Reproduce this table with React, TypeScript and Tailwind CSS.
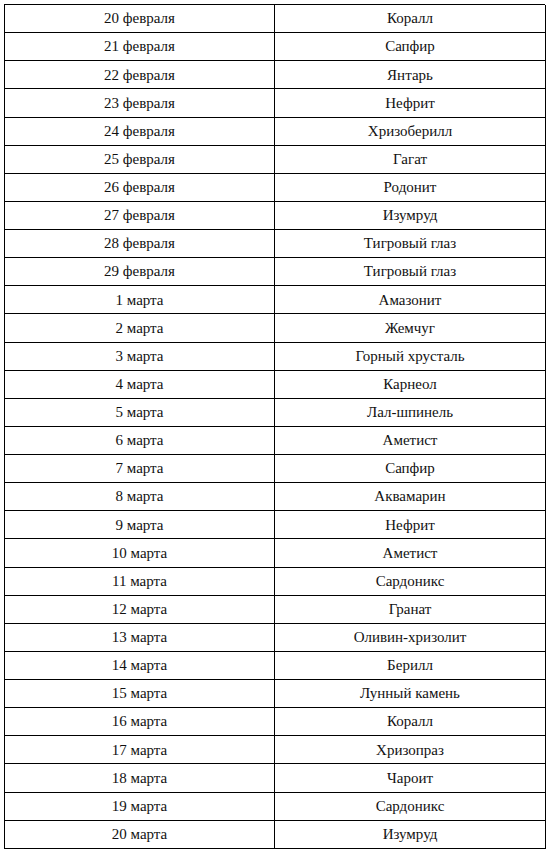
const rows: [string, string][] = [
  ['20 февраля', 'Коралл'],
  ['21 февраля', 'Сапфир'],
  ['22 февраля', 'Янтарь'],
  ['23 февраля', 'Нефрит'],
  ['24 февраля', 'Хризоберилл'],
  ['25 февраля', 'Гагат'],
  ['26 февраля', 'Родонит'],
  ['27 февраля', 'Изумруд'],
  ['28 февраля', 'Тигровый глаз'],
  ['29 февраля', 'Тигровый глаз'],
  ['1 марта', 'Амазонит'],
  ['2 марта', 'Жемчуг'],
  ['3 марта', 'Горный хрусталь'],
  ['4 марта', 'Карнеол'],
  ['5 марта', 'Лал-шпинель'],
  ['6 марта', 'Аметист'],
  ['7 марта', 'Сапфир'],
  ['8 марта', 'Аквамарин'],
  ['9 марта', 'Нефрит'],
  ['10 марта', 'Аметист'],
  ['11 марта', 'Сардоникс'],
  ['12 марта', 'Гранат'],
  ['13 марта', 'Оливин-хризолит'],
  ['14 марта', 'Берилл'],
  ['15 марта', 'Лунный камень'],
  ['16 марта', 'Коралл'],
  ['17 марта', 'Хризопраз'],
  ['18 марта', 'Чароит'],
  ['19 марта', 'Сардоникс'],
  ['20 марта', 'Изумруд'],
];

export default function App() {
  return (
    <div className="w-[549px] h-[854px] bg-white pt-[4px] pl-[4px] [font-family:Liberation_Serif,Times_New_Roman,serif] text-[15px] text-[#111]">
      <div className="grid grid-cols-[270px_271px] w-[541px] border-t border-l border-black">
        {rows.map(([date, stone], i) => (
          <div key={i} className="contents">
            <div className="h-[28.13px] border-r border-b border-black flex items-center justify-center">{date}</div>
            <div className="h-[28.13px] border-r border-b border-black flex items-center justify-center">{stone}</div>
          </div>
        ))}
      </div>
    </div>
  );
}
